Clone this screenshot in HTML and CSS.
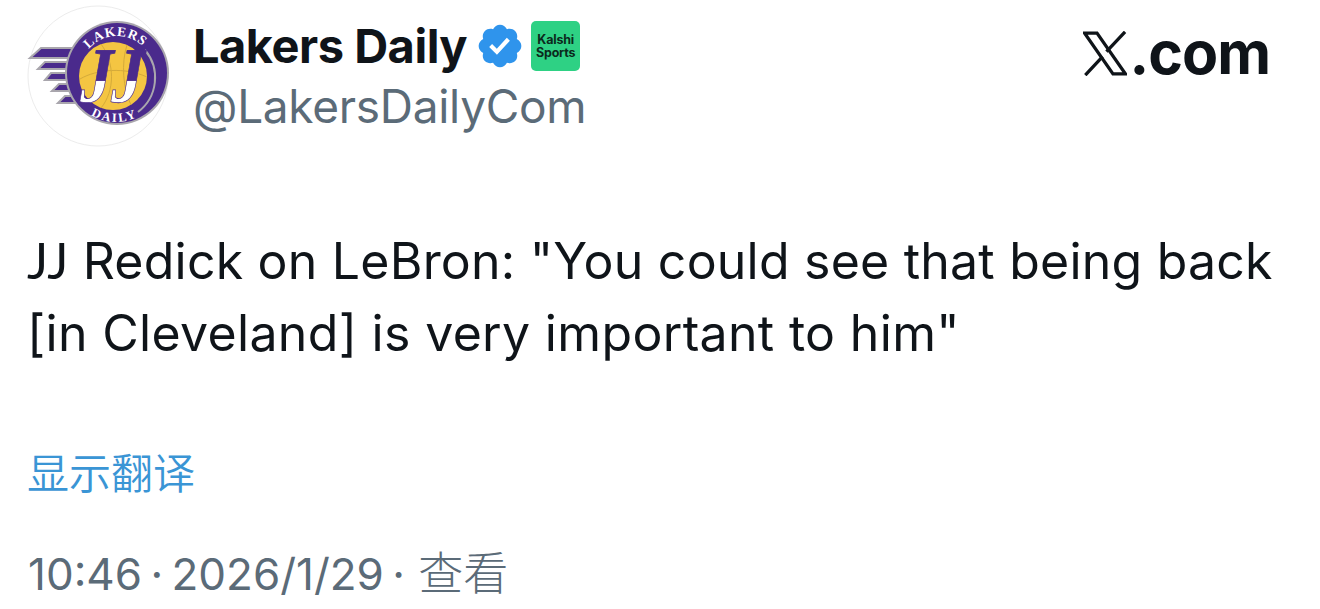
FILE: index.html
```html
<!DOCTYPE html>
<html lang="zh-CN">
<head>
<meta charset="utf-8">
<title>Lakers Daily</title>
<link rel="stylesheet" href="styles.css">
</head>
<body>
<main class="post">
  <header class="head">
    <div class="avatar">
      <svg viewBox="0 0 142 142" width="142" height="142">
        <defs>
          <path id="arcTop" d="M61.7 44.2 A37 37 0 0 1 118.3 44.2"/>
          <path id="arcBot" d="M64 110 A49 49 0 0 0 114 110"/>
          <linearGradient id="jj" x1="0" y1="0" x2="0" y2="1">
            <stop offset="0.56" stop-color="#4a2a8c"/>
            <stop offset="0.57" stop-color="#ffffff"/>
          </linearGradient>
        </defs>
        <circle class="a-bg" cx="71" cy="71" r="70"/>
        <g class="stripes">
          <polygon points="3,53 14,43 60,43 54,53"/>
          <polygon points="11,64 18,57 60,57 60,64"/>
          <polygon points="18,75 24,68 60,68 60,75"/>
          <polygon points="25,86 32,79 60,79 60,86"/>
          <polygon points="31,98 38,91 60,91 62,98"/>
        </g>
        <circle class="ring-out" cx="90" cy="68" r="52"/>
        <circle class="ring" cx="90" cy="68" r="50"/>
        <circle class="ball" cx="86" cy="71" r="34"/>
        <path class="seam" d="M53 74 C70 64 98 62 120 72 M74 39 C88 58 88 86 74 103 M100 40 C94 58 96 84 104 100"/>
        <path class="arc" d="M118 45 A43 43 0 0 1 111 107"/>
        <text class="ring-t" textLength="60"><textPath href="#arcTop">LAKERS</textPath></text>
        <text class="ring-b" textLength="47"><textPath href="#arcBot">DAILY</textPath></text>
        <text class="jj" transform="translate(50 97) skewX(-10)" textLength="62" lengthAdjust="spacingAndGlyphs">JJ</text>
      </svg>
    </div>
    <div class="who">
      <div class="name-row">
        <span class="name">Lakers Daily</span>
        <svg class="verified" viewBox="0 0 24 24" width="50" height="50"><path d="M22.25 12c0-1.43-.88-2.67-2.19-3.34.46-1.39.2-2.9-.81-3.91s-2.52-1.27-3.91-.81c-.66-1.31-1.91-2.19-3.34-2.19s-2.67.88-3.33 2.19c-1.4-.46-2.91-.2-3.92.81s-1.26 2.52-.8 3.91c-1.31.67-2.2 1.91-2.2 3.34s.89 2.67 2.2 3.34c-.46 1.39-.21 2.9.8 3.91s2.52 1.26 3.91.81c.67 1.31 1.91 2.19 3.34 2.19s2.68-.88 3.34-2.19c1.39.45 2.9.2 3.91-.81s1.27-2.52.81-3.91c1.31-.67 2.19-1.91 2.19-3.34zm-11.71 4.2L6.8 12.46l1.41-1.42 2.26 2.26 4.8-5.23 1.47 1.36-6.2 6.77z"/></svg>
        <span class="kalshi"><span>Kalshi</span><span>Sports</span></span>
      </div>
      <div class="handle">@LakersDailyCom</div>
    </div>
    <div class="brand">
      <svg class="xlogo" viewBox="0 0 135 135" width="44" height="45"><path d="M5 5H43L130 130H92Z"/><path d="M129 1L72 62M7 134L60 77"/></svg>
      <span class="brand-t">.com</span>
    </div>
  </header>
  <p class="text"><span class="jjn">JJ</span> Redick on LeBron: "You could see that being back<br><span class="line2">[in Cleveland] is very important to him"</span></p>
  <div class="translate">显示翻译</div>
  <div class="meta">10:46 · 2026/1/29 · <span class="cjk">查看</span></div>
</main>
</body>
</html>
```
FILE: styles.css
```css
* { box-sizing: border-box; }
html, body { margin: 0; height: 609px; overflow: hidden; background: #fff; }
body { font-family: Inter, "Noto Sans CJK SC", sans-serif; color: #0f1419; }
.post { padding: 5px 50px 0 27px; }
.head { display: flex; align-items: flex-start; height: 142px; }
.avatar { width: 142px; height: 142px; flex: none; }
.a-bg { fill: #fff; stroke: #ececec; stroke-width: 1; }
.stripes polygon { fill: #4a2a8c; stroke: #a9a6ad; stroke-width: 2; }
.ring-out { fill: #a9a6ad; }
.ring { fill: #4a2a8c; }
.ball { fill: #f4c542; }
.seam { fill: none; stroke: #d4aa3a; stroke-width: 1; }
.arc { fill: none; stroke: #a9a6ad; stroke-width: 2; }
.ring-t, .ring-b { font-family: "Liberation Serif", serif; font-weight: 700; fill: #fff; }
.ring-t { font-size: 13.5px; }
.ring-b { font-size: 12.5px; }
.jj { font-family: "Liberation Serif", serif; font-weight: 700; font-size: 79px; fill: url(#jj); stroke: #4a2a8c; stroke-width: .8; }
.who { margin-left: 24px; padding-top: 11px; }
.name-row { display: flex; align-items: center; height: 59px; }
.name { font-size: 47px; font-weight: 700; letter-spacing: -.5px; line-height: 59px; }
.verified { fill: #2f94ec; margin-left: 8px; flex: none; }
.kalshi { display: flex; flex-direction: column; align-items: center; justify-content: center; width: 49px; height: 50px; margin-left: 6px; border-radius: 5px; background: #2ed184; font-size: 12.5px; font-weight: 700; line-height: 13px; letter-spacing: -.2px; color: #0b2a1c; }
.handle { font-size: 46px; line-height: 56px; margin-top: 3px; color: #5b6b78; letter-spacing: -.3px; }
.brand { margin-left: auto; display: flex; align-items: center; padding-top: 24px; height: 72px; gap: 3px; }
.xlogo { fill: none; stroke: #0f1419; stroke-width: 10; }
.brand-t { font-size: 59px; font-weight: 700; line-height: 52px; letter-spacing: -1px; }
.text { margin: 77px 0 0 0; font-size: 50px; line-height: 72px; font-weight: 400; white-space: nowrap; letter-spacing: .22px; }
.jjn { font-family: Lato, Inter, sans-serif; letter-spacing: 0; }
.line2 { letter-spacing: .33px; }
.translate { margin: 74px 0 0 0; font-size: 42px; line-height: 56px; color: #3a95d5; font-family: "Noto Sans CJK SC", sans-serif; font-weight: 350; }
.meta { margin: 44px 0 0 1px; font-size: 44px; line-height: 56px; color: #5b6b78; white-space: nowrap; word-spacing: -4px; }
.cjk { font-family: "Noto Sans CJK SC", sans-serif; font-weight: 300; font-size: 45px; margin-left: 5px; }
```
